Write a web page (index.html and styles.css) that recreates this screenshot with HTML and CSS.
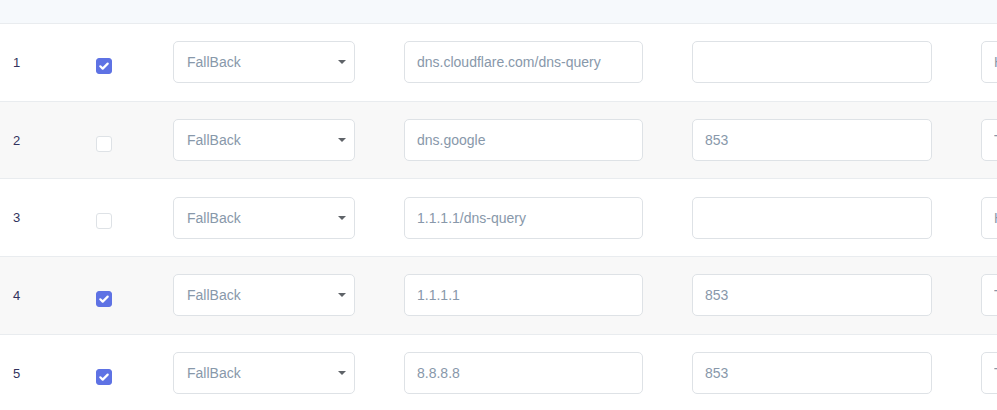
FILE: index.html
```html
<!DOCTYPE html>
<html lang="en">
<head>
    <meta charset="UTF-8">
    <meta name="viewport" content="width=device-width, initial-scale=1.0">
    <title>DNS servers</title>
    <link rel="stylesheet" href="styles.css">
</head>
<body>
    <div class="table">
        <div class="thead"></div>

        <div class="row">
            <div class="num">1</div>
            <div class="cell-check"><span class="check checked"><svg viewBox="0 0 16 16" width="16" height="16"><path d="M4.3 8.3l2.4 2.3 5-5" fill="none" stroke="#fff" stroke-width="2.2" stroke-linecap="round" stroke-linejoin="round"/></svg></span></div>
            <div class="cell-select"><div class="select"><span>FallBack</span><svg class="caret" viewBox="0 0 8 4" width="8" height="4"><path d="M0 0h8L4 4z" fill="#5f6368"/></svg></div></div>
            <div class="cell-input"><input class="input-field" type="text" value="dns.cloudflare.com/dns-query"></div>
            <div class="cell-input"><input class="input-field" type="text" value=""></div>
            <div class="cell-input"><input class="input-field" type="text" value="HTTPS"></div>
        </div>

        <div class="row">
            <div class="num">2</div>
            <div class="cell-check"><span class="check"></span></div>
            <div class="cell-select"><div class="select"><span>FallBack</span><svg class="caret" viewBox="0 0 8 4" width="8" height="4"><path d="M0 0h8L4 4z" fill="#5f6368"/></svg></div></div>
            <div class="cell-input"><input class="input-field" type="text" value="dns.google"></div>
            <div class="cell-input"><input class="input-field" type="text" value="853"></div>
            <div class="cell-input"><input class="input-field" type="text" value="TLS"></div>
        </div>

        <div class="row">
            <div class="num">3</div>
            <div class="cell-check"><span class="check"></span></div>
            <div class="cell-select"><div class="select"><span>FallBack</span><svg class="caret" viewBox="0 0 8 4" width="8" height="4"><path d="M0 0h8L4 4z" fill="#5f6368"/></svg></div></div>
            <div class="cell-input"><input class="input-field" type="text" value="1.1.1.1/dns-query"></div>
            <div class="cell-input"><input class="input-field" type="text" value=""></div>
            <div class="cell-input"><input class="input-field" type="text" value="HTTPS"></div>
        </div>

        <div class="row">
            <div class="num">4</div>
            <div class="cell-check"><span class="check checked"><svg viewBox="0 0 16 16" width="16" height="16"><path d="M4.3 8.3l2.4 2.3 5-5" fill="none" stroke="#fff" stroke-width="2.2" stroke-linecap="round" stroke-linejoin="round"/></svg></span></div>
            <div class="cell-select"><div class="select"><span>FallBack</span><svg class="caret" viewBox="0 0 8 4" width="8" height="4"><path d="M0 0h8L4 4z" fill="#5f6368"/></svg></div></div>
            <div class="cell-input"><input class="input-field" type="text" value="1.1.1.1"></div>
            <div class="cell-input"><input class="input-field" type="text" value="853"></div>
            <div class="cell-input"><input class="input-field" type="text" value="TLS"></div>
        </div>

        <div class="row">
            <div class="num">5</div>
            <div class="cell-check"><span class="check checked"><svg viewBox="0 0 16 16" width="16" height="16"><path d="M4.3 8.3l2.4 2.3 5-5" fill="none" stroke="#fff" stroke-width="2.2" stroke-linecap="round" stroke-linejoin="round"/></svg></span></div>
            <div class="cell-select"><div class="select"><span>FallBack</span><svg class="caret" viewBox="0 0 8 4" width="8" height="4"><path d="M0 0h8L4 4z" fill="#5f6368"/></svg></div></div>
            <div class="cell-input"><input class="input-field" type="text" value="8.8.8.8"></div>
            <div class="cell-input"><input class="input-field" type="text" value="853"></div>
            <div class="cell-input"><input class="input-field" type="text" value="TLS"></div>
        </div>
    </div>
</body>
</html>
```

FILE: styles.css
```css
body {
    margin: 0;
    padding: 0;
    background: #fff;
    font-family: "Liberation Sans", Arial, sans-serif;
    color: #525f7f;
    overflow: hidden;
}
.table {
    width: 1100px;
}
.thead {
    height: 23px;
    background-color: #f6f9fc;
    border-bottom: 1px solid #e9ecef;
}
.row {
    display: grid;
    grid-template-columns: 83px 77px 231px 288px 289px 240px;
    align-items: center;
    height: 76.7px;
    padding-left: 13px;
    border-bottom: 1px solid #e9ecef;
}
.row:nth-child(odd) {
    background-color: #f8f8f8;
}
.num {
    font-size: 13px;
    color: #32325d;
}
.cell-check {
    display: flex;
    align-items: center;
    padding-top: 7px;
}
.check {
    box-sizing: border-box;
    width: 16px;
    height: 16px;
    border: 1px solid #dee2e6;
    border-radius: 3px;
    background: #fff;
    display: flex;
}
.check.checked {
    background: #5e72e4;
    border-color: #5e72e4;
}
.check svg {
    margin: -1px;
}
.select {
    box-sizing: border-box;
    width: 182px;
    height: 42px;
    padding: 0 8px 0 13px;
    border: 1px solid #dee2e6;
    border-radius: 5px;
    background: #fff;
    display: flex;
    align-items: center;
    justify-content: space-between;
    font-size: 14px;
    color: #8898aa;
}
.input-field {
    box-sizing: border-box;
    display: block;
    width: 239px;
    height: 42px;
    margin: 0;
    padding: 0 12px;
    border: 1px solid #dee2e6;
    border-radius: 5px;
    background: #fff;
    font-family: "Liberation Sans", Arial, sans-serif;
    font-size: 14px;
    color: #8898aa;
    outline: none;
}
.cell-input:nth-child(5) .input-field {
    width: 240px;
}
```
